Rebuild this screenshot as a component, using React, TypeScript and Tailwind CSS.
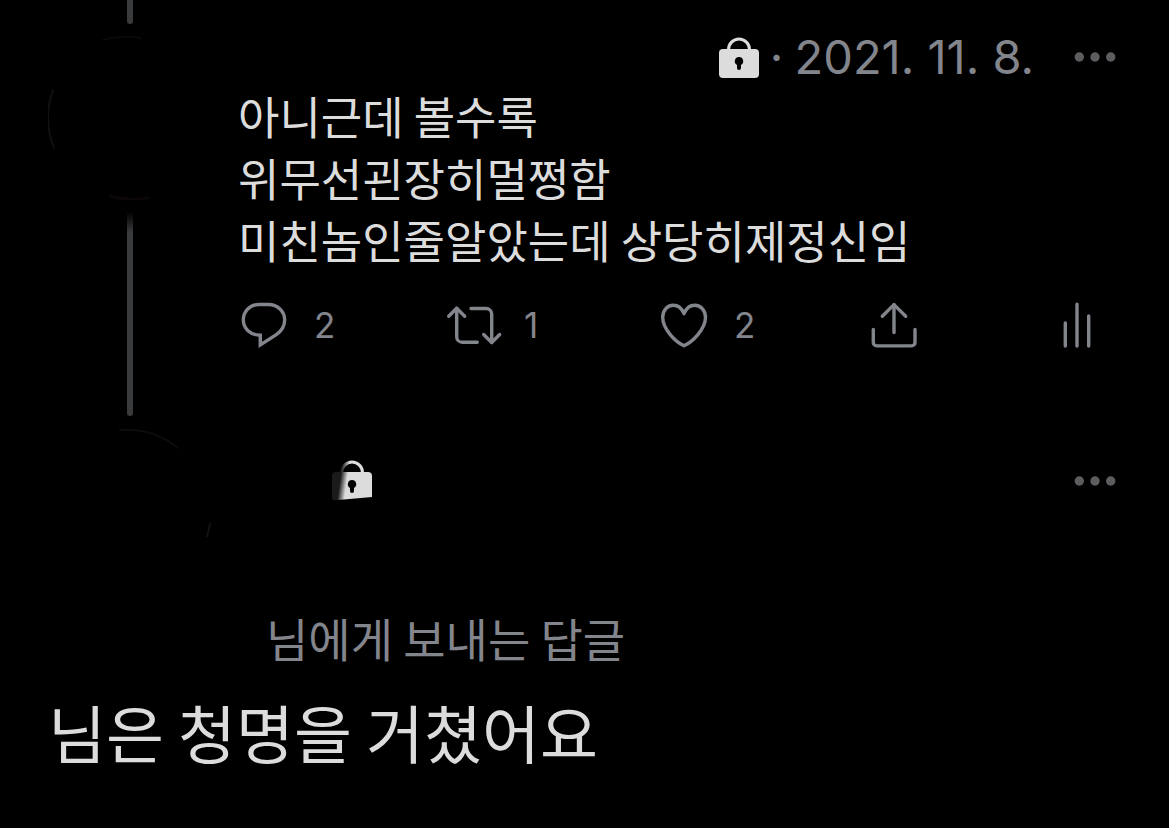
import React from 'react';

const MoreIcon: React.FC = () => (
  <svg width="42" height="12" viewBox="0 0 42 12" fill="#5c5d60" aria-hidden="true">
    <circle cx="5.3" cy="6" r="4.7" />
    <circle cx="21" cy="6" r="4.7" />
    <circle cx="36.7" cy="6" r="4.7" />
  </svg>
);

const LockIcon: React.FC<{ faded?: boolean }> = ({ faded }) => (
  <svg width="40" height="41" viewBox="0 0 40 41" className="shrink-0" aria-hidden="true">
    <defs>
      <linearGradient id="lock-fade" gradientUnits="userSpaceOnUse" x1="8" y1="20" x2="15" y2="21">
        <stop offset="0" stopColor="#000" stopOpacity="0.88" />
        <stop offset="1" stopColor="#000" stopOpacity="0" />
      </linearGradient>
    </defs>
    <path d="M9.5 14V12.5a10.5 10.5 0 0 1 21 0V14" fill="none" stroke="#dcdcdc" strokeWidth="3" />
    <rect y="12" width="40" height="29" rx="4" fill="#dcdcdc" />
    <path d="M20 20a4.2 4.2 0 0 0-2 7.9V31a2 2 0 0 0 4 0v-3.1A4.2 4.2 0 0 0 20 20z" fill="#000" />
    {faded && (
      <>
        <rect width="40" height="41" fill="url(#lock-fade)" />
        <path d="M0 40.5L12 39.5L40 37V41H0z" fill="#000" />
      </>
    )}
  </svg>
);

const actionStroke = {
  fill: 'none',
  stroke: '#83858c',
  strokeWidth: 3.4,
  strokeLinecap: 'round' as const,
  strokeLinejoin: 'round' as const,
  'aria-hidden': true,
};

const ReplyIcon: React.FC = () => (
  <svg width="48" height="48" viewBox="0 0 48 48" {...actionStroke} strokeLinejoin="miter">
    <path d="M19 3.5h9.5c9 0 16.2 6.8 16.2 15.3 0 6-2.8 11-8.4 14.9L20.3 44V34.2C10 34.2 3.3 27.5 3.3 18.8 3.3 10.3 10 3.5 19 3.5z" />
  </svg>
);

const RetweetIcon: React.FC = () => (
  <svg width="54" height="48" viewBox="0 0 54 48" className="overflow-visible" {...actionStroke}>
    <path d="M4.7 15.3l8-8 8 8" />
    <path d="M12.7 7.3v28.4a5.6 5.6 0 0 0 5.6 5.6h15" />
    <path d="M27 7.5h15.1a5.6 5.6 0 0 1 5.6 5.6v28.4" />
    <path d="M39.7 33.5l8 8 8-8" />
  </svg>
);

const HeartIcon: React.FC = () => (
  <svg width="48" height="48" viewBox="0 0 48 48" {...actionStroke}>
    <path d="M24 12.7C22 8 18.8 4.3 13.3 4.3 7 4.3 2.7 9.6 2.7 16.3 2.7 28.2 15.6 41 24 44.7c8.4-3.7 21.5-16.5 21.5-28.4 0-6.7-4.4-12-10.8-12C29.2 4.3 26 8 24 12.7z" />
  </svg>
);

const ShareIcon: React.FC = () => (
  <svg width="48" height="48" viewBox="0 0 48 48" {...actionStroke}>
    <path d="M12.3 15.3L24 3.6l11.7 11.7" />
    <path d="M24 3.6v28" />
    <path d="M3.3 28.5v13a3.4 3.4 0 0 0 3.4 3.4h34.9a3.4 3.4 0 0 0 3.4-3.4v-13" />
  </svg>
);

const StatsIcon: React.FC = () => (
  <svg width="34" height="48" viewBox="0 0 34 48" {...actionStroke}>
    <path d="M5.3 22v23M17 3.3V45M28.7 15v30" />
  </svg>
);

const Avatar: React.FC<{ children: React.ReactNode }> = ({ children }) => (
  <svg
    viewBox="0 0 164 164"
    className="block size-[164px] shrink-0"
    fill="none"
    strokeLinecap="round"
    aria-hidden="true"
  >
    {children}
  </svg>
);

const Action: React.FC<{ label: string; count?: number; children: React.ReactNode }> = ({ label, count, children }) => (
  <button type="button" aria-label={label} className="flex items-center gap-[26px] justify-self-start">
    {children}
    {count !== undefined && (
      <span className="font-['Inter',sans-serif] text-[35px] leading-[50px] text-[#83858c]">{count}</span>
    )}
  </button>
);

const App: React.FC = () => {
  return (
    <main className="min-h-screen bg-black pr-[53px] pb-10 pl-12 font-['Noto_Sans_CJK_KR',sans-serif] text-[#dcdcdc]">
      <article className="flex gap-[26px]">
        <div className="flex w-[164px] shrink-0 flex-col items-center">
          <div className="h-6 w-1.5 rounded-b-full bg-[#3a3b3d]" />
          <div className="my-3">
            <Avatar>
              <path d="M6 112A82 82 0 0 1 5 54" stroke="#101012" strokeWidth="2" />
              <path d="M55 4a82 82 0 0 1 38-2" stroke="#08090c" strokeWidth="2" />
              <path d="M62 160a82 82 0 0 0 38 2" stroke="#0c0707" strokeWidth="3" />
            </Avatar>
          </div>
          <div className="w-1.5 flex-1 rounded-b-full bg-linear-to-b from-transparent to-[#3a3b3d] to-10%" />
        </div>

        <div className="min-w-0 flex-1 pt-[35px] pb-[66px]">
          <header className="flex h-11 items-center justify-end">
            <LockIcon />
            <div className="flex items-center font-['Inter',sans-serif] text-[47px] leading-[44px] text-[#83858c]">
              <span className="w-9 text-center">·</span>
              <time dateTime="2021-11-08">2021. 11. 8.</time>
            </div>
            <button type="button" aria-label="더 보기" className="ml-10">
              <MoreIcon />
            </button>
          </header>

          <p className="mt-1.5 text-[45px] leading-[62px]">
            아니근데 볼수록
            <br />
            위무선괸장히멀쩡함
            <br />
            미친놈인줄알았는데 상당히제정신임
          </p>

          <div className="mt-[29px] grid grid-cols-[204fr_216fr_210fr_190fr_auto] pr-[22px] pl-0.5">
            <Action label="답글" count={2}>
              <ReplyIcon />
            </Action>
            <Action label="리트윗" count={1}>
              <RetweetIcon />
            </Action>
            <Action label="마음에 들어요" count={2}>
              <HeartIcon />
            </Action>
            <Action label="공유">
              <ShareIcon />
            </Action>
            <Action label="통계">
              <StatsIcon />
            </Action>
          </div>
        </div>
      </article>

      <article className="pt-2.5">
        <header className="flex gap-6">
          <Avatar>
            <path d="M72 4a82 82 0 0 1 58 18" stroke="#0c0c0d" strokeWidth="2" />
            <path d="M162 98a82 82 0 0 1-3 12" stroke="#121213" strokeWidth="2" />
          </Avatar>
          <div className="mt-[34px] flex h-[41px] flex-1 items-center justify-between pl-24">
            <LockIcon faded />
            <button type="button" aria-label="더 보기">
              <MoreIcon />
            </button>
          </div>
        </header>

        <p className="mt-4 pl-[218px] text-[46px] leading-[62px] text-[#83858c]">님에게 보내는 답글</p>
        <p className="mt-5 text-[63px] leading-[86px]">님은 청명을 거쳤어요</p>
      </article>
    </main>
  );
};

export default App;
